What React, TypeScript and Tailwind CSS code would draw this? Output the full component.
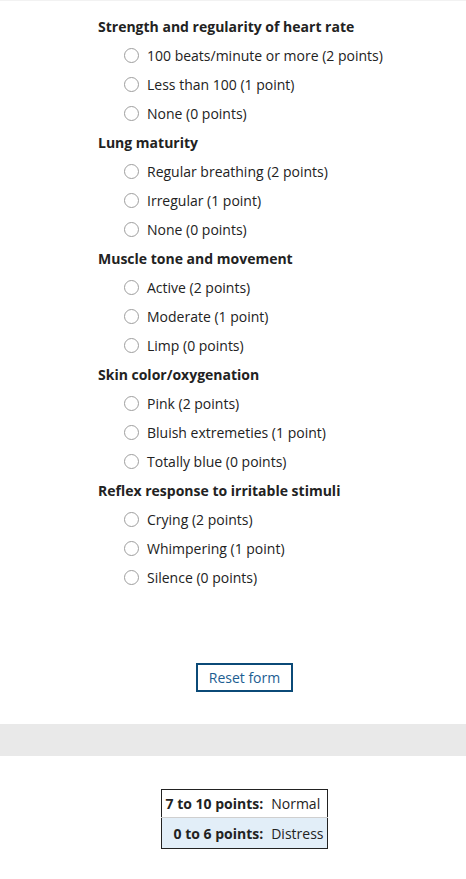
import { useState } from 'react';

type Criterion = {
  id: string;
  title: string;
  options: string[];
};

const criteria: Criterion[] = [
  {
    id: 'heart',
    title: 'Strength and regularity of heart rate',
    options: ['100 beats/minute or more (2 points)', 'Less than 100 (1 point)', 'None (0 points)'],
  },
  {
    id: 'lung',
    title: 'Lung maturity',
    options: ['Regular breathing (2 points)', 'Irregular (1 point)', 'None (0 points)'],
  },
  {
    id: 'muscle',
    title: 'Muscle tone and movement',
    options: ['Active (2 points)', 'Moderate (1 point)', 'Limp (0 points)'],
  },
  {
    id: 'skin',
    title: 'Skin color/oxygenation',
    options: ['Pink (2 points)', 'Bluish extremeties (1 point)', 'Totally blue (0 points)'],
  },
  {
    id: 'reflex',
    title: 'Reflex response to irritable stimuli',
    options: ['Crying (2 points)', 'Whimpering (1 point)', 'Silence (0 points)'],
  },
];

export default function App() {
  const [answers, setAnswers] = useState<Record<string, number>>({});

  return (
    <div
      className="min-h-[879px] bg-white text-[14px] text-[#222]"
      style={{ fontFamily: '"Open Sans", "Noto Sans", sans-serif' }}
    >
      <div className="border-t border-[#f2f2f2]" />
      <form className="pt-[11px]">
        <div className="pl-[98px]">
          {criteria.map((c) => (
            <fieldset key={c.id}>
              <legend className="flex h-[29px] items-center font-bold text-[#222]">{c.title}</legend>
              {c.options.map((opt, i) => {
                const checked = answers[c.id] === i;
                return (
                  <label key={opt} className="flex h-[29px] cursor-pointer items-center pl-[26px]">
                    <span
                      className={
                        'mr-[8px] inline-block h-[15px] w-[15px] rounded-full bg-white ' +
                        (checked ? 'border-[4px] border-[#005a9c]' : 'border border-[#9e9e9e]')
                      }
                    />
                    <input
                      type="radio"
                      name={c.id}
                      className="sr-only"
                      checked={checked}
                      onChange={() => setAnswers({ ...answers, [c.id]: i })}
                    />
                    <span>{opt}</span>
                  </label>
                );
              })}
            </fieldset>
          ))}
        </div>

        <div className="flex justify-center pl-[23px] pt-[71px]">
          <button
            type="button"
            onClick={() => setAnswers({})}
            className="h-[29px] border-2 border-[#0b4a77] px-[11px] text-[#1d5e92]"
          >
            Reset form
          </button>
        </div>
      </form>

      <div className="mt-[32px] h-[32px] bg-[#e9e9e9]" />

      <div className="flex justify-center pl-[23px] pt-[33px]">
        <table className="border-collapse border border-[#222]">
          <tbody>
            <tr className="h-[28px] border-b border-[#cfcfcf]">
              <th className="pl-[4px] pr-[8px] text-right font-bold">7 to 10 points:</th>
              <td className="pr-[6px]">Normal</td>
            </tr>
            <tr className="h-[31px] bg-[#e2eef8]">
              <th className="pl-[4px] pr-[8px] text-right font-bold">0 to 6 points:</th>
              <td className="pr-[4px]">Distress</td>
            </tr>
          </tbody>
        </table>
      </div>
    </div>
  );
}
